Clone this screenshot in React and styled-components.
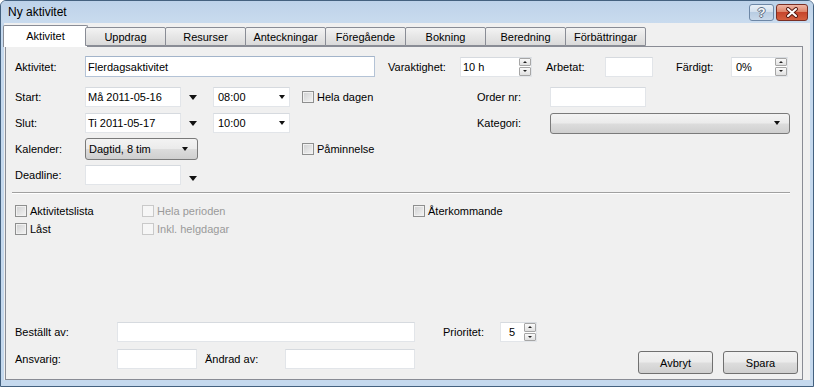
import React from 'react';
import styled, { createGlobalStyle } from 'styled-components';

const GlobalStyle = createGlobalStyle`
  html, body {
    margin: 0;
    padding: 0;
    background: #fff;
  }
  body {
    font-family: "Liberation Sans", Arial, sans-serif;
    font-size: 11px;
    color: #000;
  }
`

const Window = styled.div`
  box-sizing: border-box;
  width: 814px;
  height: 387px;
  border: 1px solid #44617f;
  border-radius: 6px 6px 0 0;
  background: #c5d9ee;
  display: flex;
  flex-direction: column;
  overflow: hidden;
`

const TitleBar = styled.div`
  height: 22px;
  flex-shrink: 0;
  display: flex;
  align-items: flex-start;
  padding: 0 5px 0 7px;
  background: linear-gradient(#bdd2e9, #c9dbee);
`

const Title = styled.div`
  flex: 1;
  font-size: 12px;
  line-height: 22px;
`

const CaptionButton = styled.div`
  box-sizing: border-box;
  height: 17px;
  width: ${p => p.w}px;
  margin: 3px 0 0 ${p => p.ml || 0}px;
  border-radius: 3px;
  display: flex;
  align-items: center;
  justify-content: center;
  border: 1px solid ${p => p.close ? '#7a2f24' : '#6d87a6'};
  background: ${p => p.close
    ? 'linear-gradient(#efb6a6 0%, #dd8469 45%, #c6452c 50%, #d4603f 100%)'
    : 'linear-gradient(#e8eff7 0%, #d3e0ee 45%, #b8cce2 50%, #c9d9ea 100%)'};
  color: #f4f6f8;
  font-weight: bold;
  font-size: 13px;
  text-shadow: -1px 0 0 #5d6f84, 1px 0 0 #5d6f84, 0 -1px 0 #5d6f84, 0 1px 0 #5d6f84;
`

const Client = styled.div`
  margin: 0 3px 6px 3px;
  padding-left: 1px;
  flex: 1;
  background: #f0f0f0;
  display: flex;
  flex-direction: column;
`

const TabStrip = styled.div`
  height: 23px;
  display: flex;
  align-items: flex-end;
`

const Tab = styled.div`
  box-sizing: border-box;
  width: ${p => p.active ? 85 : 81}px;
  height: ${p => p.active ? 22 : 19}px;
  margin: 0 ${p => p.active ? -3 : -1}px ${p => p.active ? -1 : 0}px ${p => p.active ? -2 : 0}px;
  border: 1px solid #898c95;
  border-bottom: ${p => p.active ? 'none' : '1px solid #898c95'};
  border-radius: 2px 2px 0 0;
  background: ${p => p.active ? '#fff' : 'linear-gradient(#f3f3f3, #e6e6e6 50%, #dadada)'};
  position: ${p => p.active ? 'relative' : 'static'};
  z-index: 1;
  display: flex;
  align-items: center;
  justify-content: center;
  padding-bottom: ${p => p.active ? 2 : 0}px;
`

const Panel = styled.div`
  box-sizing: border-box;
  width: 798px;
  height: 334px;
  border: 1px solid #898c95;
  background: #f0f0f0;
  padding: 9px 0 5px 9px;
  display: flex;
  flex-direction: column;
`

const Row = styled.div`
  display: flex;
  align-items: ${p => p.top ? 'flex-start' : 'center'};
  height: ${p => p.h}px;
  margin-top: ${p => p.mt || 0}px;
`

const Label = styled.span`
  flex-shrink: 0;
  width: ${p => p.w}px;
  margin-left: ${p => p.ml || 0}px;
  line-height: 20px;
  white-space: nowrap;
`

const TextBox = styled.div`
  box-sizing: border-box;
  flex-shrink: 0;
  width: ${p => p.w}px;
  height: ${p => p.h || 20}px;
  margin-left: ${p => p.ml || 0}px;
  padding-left: ${p => p.pl || 2}px;
  background: #fff;
  border: 1px solid ${p => p.focus ? '#b4c3d6' : '#e2e5e9'};
  border-top-color: ${p => p.focus ? '#a3b4ca' : '#d6dadf'};
  display: flex;
  align-items: center;
  white-space: nowrap;
  justify-self: start;
`

const Spinner = styled.div`
  margin-left: auto;
  width: 12px;
  height: 100%;
  display: flex;
  flex-direction: column;
  gap: 1px;
`

const SpinButton = styled.div`
  box-sizing: border-box;
  flex: 1;
  border: 1px solid #a6a6a6;
  border-radius: 1px;
  background: linear-gradient(#fafafa, #e0e0e0);
  display: flex;
  align-items: center;
  justify-content: center;

  &::after {
    content: '';
    border-left: 2px solid transparent;
    border-right: 2px solid transparent;
    ${p => p.down ? 'border-top: 2px solid #222;' : 'border-bottom: 2px solid #222;'}
  }
`

const DropArrow = styled.span`
  justify-self: start;
  width: 0;
  height: 0;
  margin-left: ${p => p.ml || 0}px;
  margin-top: ${p => p.mt || 0}px;
  border-left: ${p => p.size}px solid transparent;
  border-right: ${p => p.size}px solid transparent;
  border-top: ${p => p.size + 1}px solid #111;
  ${p => p.inside && 'margin-left: auto; margin-right: 4px;'}
`

const Combo = styled.div`
  box-sizing: border-box;
  justify-self: start;
  width: ${p => p.w}px;
  height: ${p => p.h}px;
  padding: 0 5px 0 3px;
  border: 1px solid #7a7a7a;
  border-radius: 3px;
  background: linear-gradient(#f3f3f3 0%, #ebebeb 48%, #dcdcdc 52%, #cfcfcf 100%);
  display: flex;
  align-items: center;
`

const FieldGrid = styled.div`
  display: grid;
  grid-template-columns: 70px 96px 32px 77px 12px 175px 73px 1fr;
  grid-auto-rows: 26px;
  align-items: center;
  margin-top: 7px;
`

const Cell = styled.div`
  grid-column: ${p => p.col};
  grid-row: ${p => p.row};
  justify-self: start;
  display: flex;
  align-items: center;
`

const Separator = styled.div`
  margin: 4px 0 0 -3px;
  width: 778px;
  height: 1px;
  background: #a0a0a0;
  border-bottom: 1px solid #fff;
`

const CheckGrid = styled.div`
  display: grid;
  grid-template-columns: 127px 271px auto;
  grid-auto-rows: 18px;
  align-items: center;
  margin-top: 8px;
`

const CheckItem = styled.label`
  display: flex;
  align-items: center;
  gap: 3px;
  white-space: nowrap;
  color: ${p => p.disabled ? '#9a9a9a' : '#000'};
`

const Box = styled.span`
  box-sizing: border-box;
  width: 12px;
  height: 12px;
  flex-shrink: 0;
  border: 1px solid ${p => p.disabled ? '#c9c9c9' : '#8e8f8f'};
  background: ${p => p.disabled ? '#f6f6f6' : 'linear-gradient(135deg, #cfd0d1, #f4f4f4)'};
  box-shadow: inset 0 0 0 1px ${p => p.disabled ? '#f6f6f6' : '#f1f1f1'};
`

const Bottom = styled.div`
  margin-top: auto;
  display: flex;
  flex-direction: column;
`

const Button = styled.div`
  box-sizing: border-box;
  width: 75px;
  height: 23px;
  margin: 2px 0 0 ${p => p.ml}px;
  border: 1px solid #707070;
  border-radius: 3px;
  background: linear-gradient(#f2f2f2 0%, #ebebeb 48%, #dddddd 52%, #cfcfcf 100%);
  display: flex;
  align-items: center;
  justify-content: center;
`

const tabs = ['Aktivitet', 'Uppdrag', 'Resurser', 'Anteckningar', 'Föregående', 'Bokning', 'Beredning', 'Förbättringar'];

const Spin = ({ w, ml, pl, children }) => (
  <TextBox w={w} ml={ml} pl={pl}>
    {children}
    <Spinner>
      <SpinButton />
      <SpinButton down />
    </Spinner>
  </TextBox>
)

const Check = ({ disabled, children }) => (
  <CheckItem disabled={disabled}>
    <Box disabled={disabled} />
    {children}
  </CheckItem>
)

const CloseGlyph = () => (
  <svg width="14" height="11" viewBox="0 0 14 11">
    <path d="M3 2 L11 9 M11 2 L3 9" stroke="#5a1d14" strokeWidth="4" strokeLinecap="round" />
    <path d="M3 2 L11 9 M11 2 L3 9" stroke="#fff" strokeWidth="2" strokeLinecap="round" />
  </svg>
)

export default function App() {
  return (
    <>
      <GlobalStyle />
      <Window>
        <TitleBar>
          <Title>Ny aktivitet</Title>
          <CaptionButton w={25}>?</CaptionButton>
          <CaptionButton w={32} ml={2} close><CloseGlyph /></CaptionButton>
        </TitleBar>
        <Client>
          <TabStrip>
            {tabs.map((t, i) => <Tab key={t} active={i === 0}>{t}</Tab>)}
          </TabStrip>
          <Panel>
            <Row h={21}>
              <Label w={70}>Aktivitet:</Label>
              <TextBox w={290} h={21} focus>Flerdagsaktivitet</TextBox>
              <Label w={72} ml={13}>Varaktighet:</Label>
              <Spin w={72}>10 h</Spin>
              <Label w={59} ml={14}>Arbetat:</Label>
              <TextBox w={48} />
              <Label w={55} ml={23}>Färdigt:</Label>
              <Spin w={57} pl={4}>0%</Spin>
            </Row>

            <FieldGrid>
              <Label>Start:</Label>
              <TextBox w={96}>Må 2011-05-16</TextBox>
              <DropArrow size={4} ml={8} />
              <TextBox w={77} pl={4}>08:00<DropArrow size={3} inside /></TextBox>
              <span />
              <Check>Hela dagen</Check>
              <Label>Order nr:</Label>
              <TextBox w={96} />

              <Label>Slut:</Label>
              <TextBox w={96}>Ti 2011-05-17</TextBox>
              <DropArrow size={4} ml={8} />
              <TextBox w={77} pl={4}>10:00<DropArrow size={3} inside /></TextBox>
              <span />
              <span />
              <Label>Kategori:</Label>
              <Combo w={240} h={21}><DropArrow size={3} inside /></Combo>

              <Label>Kalender:</Label>
              <Cell col="2 / span 2" row={3}>
                <Combo w={113} h={22}>Dagtid, 8 tim<DropArrow size={3} inside /></Combo>
              </Cell>
              <Cell col={6} row={3}><Check>Påminnelse</Check></Cell>

              <Cell col={1} row={4}><Label>Deadline:</Label></Cell>
              <Cell col={2} row={4}><TextBox w={96} /></Cell>
              <Cell col={3} row={4}><DropArrow size={4} ml={8} mt={6} /></Cell>
            </FieldGrid>

            <Separator />

            <CheckGrid>
              <Check>Aktivitetslista</Check>
              <Check disabled>Hela perioden</Check>
              <Check>Återkommande</Check>
              <Check>Låst</Check>
              <Check disabled>Inkl. helgdagar</Check>
            </CheckGrid>

            <Bottom>
              <Row h={20}>
                <Label w={102}>Beställt av:</Label>
                <TextBox w={298} />
                <Label w={57} ml={28}>Prioritet:</Label>
                <Spin w={37} pl={8}>5</Spin>
              </Row>
              <Row h={25} mt={7} top>
                <Label w={102}>Ansvarig:</Label>
                <TextBox w={80} />
                <Label w={80} ml={8}>Ändrad av:</Label>
                <TextBox w={130} />
                <Button ml={223}>Avbryt</Button>
                <Button ml={10}>Spara</Button>
              </Row>
            </Bottom>
          </Panel>
        </Client>
      </Window>
    </>
  )
}
